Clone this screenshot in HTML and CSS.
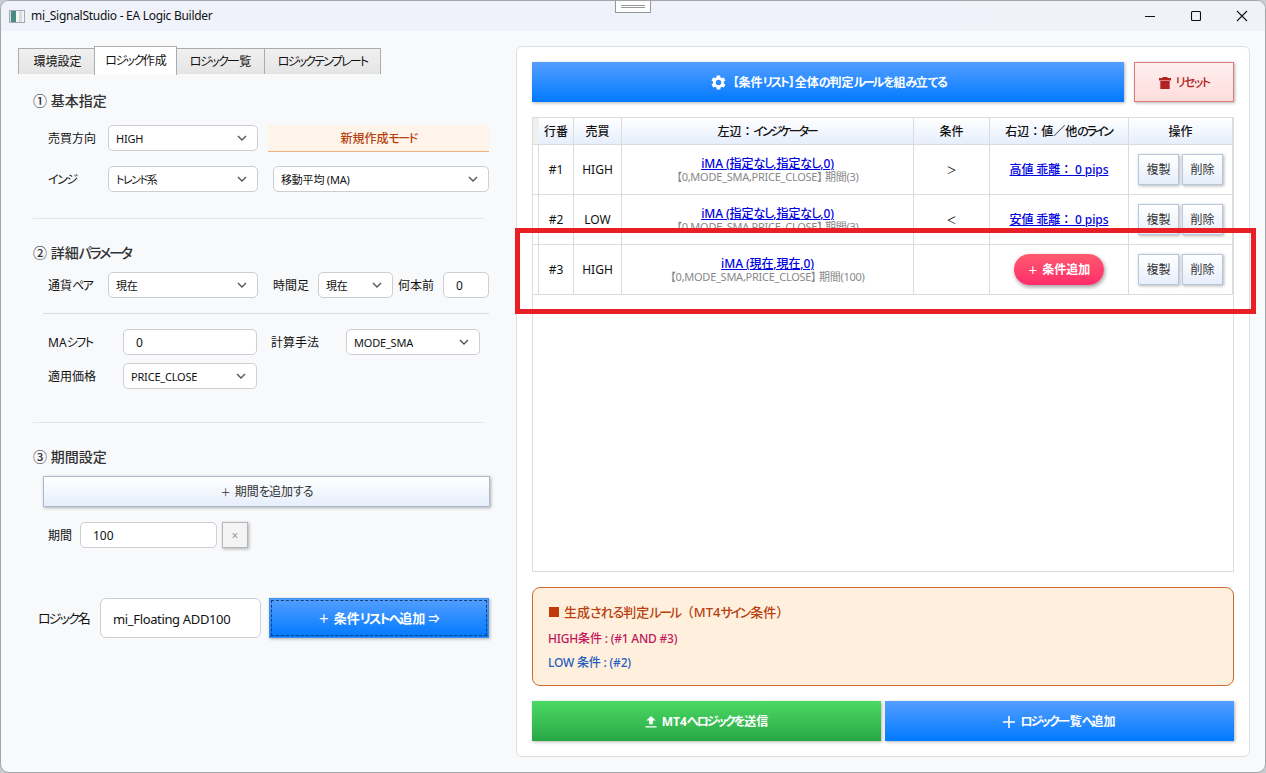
FILE: index.html
```html
<!DOCTYPE html>
<html lang="ja">
<head>
  <meta charset="UTF-8" />
  <meta name="viewport" content="width=device-width, initial-scale=1" />
  <title>mi_SignalStudio - EA Logic Builder</title>
  <link rel="stylesheet" href="styles.css">
</head>
<body>
<div class="window">
  <header class="titlebar">
    <span class="app-icon"></span>
    <span class="title">mi_SignalStudio - EA Logic Builder</span>
    <svg class="win-btn" viewBox="0 0 12 12"><path d="M1 6.5h10"/></svg>
    <svg class="win-btn" viewBox="0 0 12 12"><rect x="1.5" y="1.5" width="9" height="9" rx="1"/></svg>
    <svg class="win-btn" viewBox="0 0 12 12"><path d="M1 1l10 10M11 1L1 11"/></svg>
  </header>
  <div class="grip"></div>

  <main class="content">
    <section class="left">
      <nav class="tabs">
        <div class="tab t1">環境設定</div>
        <div class="tab t2 active"><span class="kana">ロジック</span>作成</div>
        <div class="tab t3"><span class="kana">ロジック</span>一覧</div>
        <div class="tab t4"><span class="kana">ロジックテンプレート</span></div>
      </nav>

      <h2 class="h-basic">① 基本指定</h2>
      <div class="row row-dir">
        <label class="w60">売買方向</label>
        <div class="select w150">HIGH<svg viewBox="0 0 10 6"><path d="M1 1l4 4 4-4"/></svg></div>
        <div class="mode">新規作成<span class="kana">モード</span></div>
      </div>
      <div class="row row-ind">
        <label class="w60"><span class="kana">インジ</span></label>
        <div class="select w150"><span><span class="kana">トレンド</span>系</span><svg viewBox="0 0 10 6"><path d="M1 1l4 4 4-4"/></svg></div>
        <div class="select w216">移動平均 (MA)<svg viewBox="0 0 10 6"><path d="M1 1l4 4 4-4"/></svg></div>
      </div>
      <hr class="sep sep-1">

      <h2 class="h-param">② 詳細<span class="kana tighter">パラメータ</span></h2>
      <div class="row row-pair">
        <label class="w60">通貨<span class="kana">ペア</span></label>
        <div class="select w150">現在<svg viewBox="0 0 10 6"><path d="M1 1l4 4 4-4"/></svg></div>
        <label class="l-tf">時間足</label>
        <div class="select w75">現在<svg viewBox="0 0 10 6"><path d="M1 1l4 4 4-4"/></svg></div>
        <label class="l-shift">何本前</label>
        <div class="input w46">0</div>
      </div>
      <hr class="sep sep-2">
      <div class="row row-ma">
        <label class="w75l">MA<span class="kana">シフト</span></label>
        <div class="input w134">0</div>
        <label class="l-calc">計算手法</label>
        <div class="select w134">MODE_SMA<svg viewBox="0 0 10 6"><path d="M1 1l4 4 4-4"/></svg></div>
      </div>
      <div class="row row-price">
        <label class="w75l">適用価格</label>
        <div class="select w134">PRICE_CLOSE<svg viewBox="0 0 10 6"><path d="M1 1l4 4 4-4"/></svg></div>
      </div>
      <hr class="sep sep-3">

      <h2 class="h-period">③ 期間設定</h2>
      <div class="btn btn-light add-period"><span><span class="plus">＋</span> 期間<span class="kana2">を</span>追加<span class="kana2">する</span></span></div>
      <div class="row row-period">
        <label class="w32">期間</label>
        <div class="input w137">100</div>
        <div class="btn btn-x">×</div>
      </div>

      <div class="row row-name">
        <label class="name-label"><span class="kana tight">ロジック</span>名</label>
        <div class="input name-input">mi_Floating ADD100</div>
        <div class="btn btn-blue add-list"><span><span class="plus">＋</span> 条件<span class="kana tight">リストへ</span>追加 <span class="arrow">⇒</span></span></div>
      </div>
    </section>

    <section class="panel">
      <div class="toolbar">
        <div class="btn btn-blue build">
          <svg class="icon" viewBox="0 0 24 24"><path d="M19.4 13c0-.3.1-.6.1-1s0-.7-.1-1l2.1-1.7c.2-.1.2-.4.1-.6l-2-3.500c-.1-.2-.4-.3-.6-.2l-2.500 1c-.5-.4-1.100-.7-1.700-1l-.4-2.600c0-.2-.2-.4-.5-.4h-4c-.2 0-.5.2-.5.4L9 5c-.6.300-1.200.600-1.700 1l-2.500-1c-.2-.1-.5 0-.6.2l-2 3.500c-.1.2-.1.5.1.6L4.500 11c0 .3-.1.7-.1 1s0 .7.1 1l-2.100 1.700c-.2.1-.2.4-.1.6l2 3.500c.1.2.4.3.6.2l2.500-1c.5.4 1.100.7 1.700 1l.4 2.600c0 .2.2.4.5.4h4c.2 0 .5-.2.5-.4l.4-2.600c.6-.3 1.200-.6 1.700-1l2.500 1c.2.1.5 0 .6-.2l2-3.500c.1-.2.1-.5-.1-.6L19.400 13zM12 15.800a3.800 3.800 0 1 1 0-7.600 3.800 3.800 0 0 1 0 7.600z" fill-rule="evenodd"/></svg>
          <span><span class="brackets">【条件<span class="kana tighter">リスト</span>】全</span>体<span class="kana2">の</span>判定<span class="kana tighter">ルール</span><span class="kana2">を</span>組<span class="kana">み</span>立<span class="kana">てる</span></span>
        </div>
        <div class="btn btn-reset">
          <svg class="icon" viewBox="0 0 12 12"><path d="M3.500 0h5v1H12v2.500H0V1h3.500zM1.300 4h9.400v8H1.300z"/></svg>
          <span class="kana">リセット</span>
        </div>
      </div>

      <div class="grid-box">
        <table>
          <colgroup>
            <col class="c-head"><col class="c-no"><col class="c-side"><col class="c-left"><col class="c-cond"><col class="c-right"><col class="c-op">
          </colgroup>
          <thead>
            <tr>
              <th class="corner"></th>
              <th>行番</th>
              <th>売買</th>
              <th>左辺：<span class="kana tighter">インジケーター</span></th>
              <th>条件</th>
              <th>右辺：値／他<span class="kana tighter">のライン</span></th>
              <th>操作</th>
            </tr>
          </thead>
          <tbody>
            <tr>
              <td></td>
              <td>#1</td>
              <td>HIGH</td>
              <td><a>iMA (指定<span class="kana2">なし</span>,指定<span class="kana2">なし</span>,0)</a><small>【0,MODE_SMA,PRICE_CLOSE】 期間(3)</small></td>
              <td class="cmp">＞</td>
              <td><a>高値 乖離： 0 pips</a></td>
              <td><div class="ops"><div class="btn btn-light">複製</div><div class="btn btn-light">削除</div></div></td>
            </tr>
            <tr>
              <td></td>
              <td>#2</td>
              <td>LOW</td>
              <td><a>iMA (指定<span class="kana2">なし</span>,指定<span class="kana2">なし</span>,0)</a><small>【0,MODE_SMA,PRICE_CLOSE】 期間(3)</small></td>
              <td class="cmp">＜</td>
              <td><a>安値 乖離： 0 pips</a></td>
              <td><div class="ops"><div class="btn btn-light">複製</div><div class="btn btn-light">削除</div></div></td>
            </tr>
            <tr>
              <td></td>
              <td>#3</td>
              <td>HIGH</td>
              <td><a>iMA (現在,現在,0)</a><small>【0,MODE_SMA,PRICE_CLOSE】 期間(100)</small></td>
              <td></td>
              <td><div class="pill"><span class="plus">＋</span> 条件追加</div></td>
              <td><div class="ops"><div class="btn btn-light">複製</div><div class="btn btn-light">削除</div></div></td>
            </tr>
          </tbody>
        </table>
      </div>

      <div class="rules">
        <div class="rules-title"><i class="square"></i>生成<span class="kana2">される</span>判定<span class="kana tighter">ルール</span>（MT4<span class="kana tighter">サイン</span>条件）</div>
        <div class="rule high">HIGH条件 : (#1 AND #3)</div>
        <div class="rule low">LOW 条件 : (#2)</div>
      </div>

      <div class="footer">
        <div class="btn btn-green">
          <svg class="icon" viewBox="0 0 12 13"><path d="M6 0l5 5H8v4H4V5H1zM0 11h12v1.500H0z"/></svg>
          <span>MT4<span class="kana tight">へロジック</span><span class="kana2">を</span>送信</span>
        </div>
        <div class="btn btn-blue">
          <svg class="icon" viewBox="0 0 12 12"><path d="M5.200 0h1.600v5.200H12v1.600H6.800V12H5.200V6.800H0V5.200h5.200z"/></svg>
          <span><span class="kana tight">ロジック</span>一覧<span class="kana tight">へ</span>追加</span>
        </div>
      </div>
    </section>
  </main>

  <div class="highlight"></div>
</div>
</body>
</html>
```
FILE: styles.css
```css
* {
  box-sizing: border-box;
}

body {
  margin: 0;
  background: #c9cbd0;
  font-family: "Noto Sans", "Noto Sans CJK JP", sans-serif;
  font-size: 12px;
  line-height: 16px;
  color: #111;
}

/* katakana / hiragana are set tighter than kanji */
.kana {
  font-feature-settings: "palt";
  letter-spacing: -1.5px;
}

.kana.tight {
  letter-spacing: -1.9px;
}

.kana.tighter {
  letter-spacing: -2.2px;
  margin-right: 1px;
}

.kana2 {
  font-feature-settings: "palt";
  letter-spacing: -1px;
}

.brackets {
  font-feature-settings: "palt";
}

.plus {
  margin-right: 1px;
  font-size: 0.85em;
}

.arrow {
  font-size: 0.85em;
}

.window {
  position: relative;
  width: 1266px;
  height: 773px;
  border: 1px solid #a3a5a9;
  border-radius: 9px;
  background: #f8f9fb;
  overflow: hidden;
}

.titlebar {
  height: 30px;
  padding: 0 17px 0 8px;
  display: flex;
  align-items: center;
  background: linear-gradient(90deg, #eff2fb 65%, #eff2f6);
}

.app-icon {
  width: 16px;
  height: 13px;
  margin-right: 6px;
  border: 1px solid #a4a9ae;
  background: linear-gradient(90deg, #cfe0df 0 1px, #4a8a86 1px 6px, #f4f5f5 6px 9px, #d5dde0 9px 12px, #f4f5f5 12px);
}

.title {
  flex: 1;
  font-size: 12px;
  letter-spacing: -0.28px;
}

.win-btn {
  width: 12px;
  height: 12px;
  margin-left: 34px;
  fill: none;
  stroke: #111;
  stroke-width: 1.1;
}

.grip {
  position: absolute;
  left: 614px;
  top: -1px;
  width: 36px;
  height: 13px;
  border: 1px solid #96989c;
  background: linear-gradient(#96989c, #96989c) 5px 4px / 24px 1px no-repeat,
    linear-gradient(#96989c, #96989c) 5px 6px / 24px 1px no-repeat, #fff;
}

.content {
  display: flex;
  padding: 15px 15px 15px 17px;
}

.left {
  width: 498px;
}

.tabs {
  display: flex;
  align-items: flex-end;
  height: 29px;
}

.tab {
  height: 26px;
  margin-bottom: 1px;
  border: 1px solid #acacac;
  border-bottom: none;
  background: linear-gradient(#f0f0f0, #e5e5e5);
  text-align: center;
  line-height: 26px;
}

.tab.active {
  height: 29px;
  margin-bottom: 0;
  background: #fff;
  line-height: 27px;
}

.t1 { width: 76px; border-right: none; padding-left: 2px; }
.t2 { width: 83px; padding-left: 1px; }
.t3 { width: 88px; border-left: none; }
.t4 { width: 116px; border-left: none; }

.t4 .kana {
  letter-spacing: -1.8px;
}

h2 {
  margin: 0 0 0 15px;
  font-size: 14px;
  line-height: 20px;
  font-weight: 500;
  color: #333;
}

.h-basic { margin-top: 16px; }
.h-param { margin-top: 24px; }
.h-period { margin-top: 24px; }

.row {
  display: flex;
  align-items: center;
  height: 26px;
  margin-left: 30px;
}

.row label {
  padding-top: 2px;
}

.row-dir { margin-top: 14px; }
.row-ind { margin-top: 15px; }
.row-pair { margin-top: 9px; }
.row-ma { margin-top: 15px; }
.row-price { margin-top: 8px; }
.row-period { margin-top: 15px; }

.w60 { width: 60px; }
.w75l { width: 75px; }
.w32 { width: 32px; }
.l-tf { width: 45px; margin-left: 15px; }
.l-shift { width: 45px; margin-left: 5px; }
.l-calc { width: 75px; margin-left: 14px; }

.select,
.input {
  height: 26px;
  border: 1px solid #ccced2;
  border-radius: 5px;
  background: #fff;
  display: flex;
  align-items: center;
}

.select {
  justify-content: space-between;
  padding: 1px 10px 0 7px;
  font-size: 11px;
  letter-spacing: -0.2px;
}

.select svg {
  width: 10px;
  height: 6px;
  margin-top: -2px;
  fill: none;
  stroke: #555;
  stroke-width: 1.4;
}

.input {
  padding: 1px 0 0 12px;
  font-size: 12px;
}

.w150 { width: 150px; }
.w216 { width: 216px; margin-left: 15px; }
.w75 { width: 75px; }
.w46 { width: 46px; }
.w134 { width: 134px; }
.w137 { width: 137px; }

.mode {
  width: 221px;
  height: 27px;
  margin-left: 10px;
  border-bottom: 1px solid #f0b27a;
  background: #fff4ea;
  color: #b7410e;
  font-weight: 500;
  text-align: center;
  line-height: 27px;
}

.sep {
  height: 1px;
  border: none;
  background: #e3e5e8;
}

.sep-1 { width: 451px; margin: 26px 0 0 15px; }
.sep-2 { width: 446px; margin: 15px 0 0 25px; background: #dadcdf; }
.sep-3 { width: 451px; margin: 33px 0 0 15px; }

.btn {
  display: flex;
  align-items: center;
  justify-content: center;
  padding-top: 1px;
  box-shadow: 1px 1px 3px rgba(0, 0, 0, 0.3);
}

.btn-blue {
  background: linear-gradient(#559eff, #007aff);
  color: #fff;
  font-weight: 700;
}

.btn-green {
  background: linear-gradient(#4cd964, #28a745);
  color: #fff;
  font-weight: 700;
}

.btn-light {
  border: 1px solid #b9c7dc;
  background: linear-gradient(#fff, #e6eefc);
  color: #333;
}

.add-period {
  width: 447px;
  height: 31px;
  margin: 9px 0 0 25px;
  border: 1px solid #aebacb;
}

.btn-x {
  width: 26px;
  height: 26px;
  margin-left: 5px;
  border: 1px solid #b4b6ba;
  background: #f4f4f4;
  color: #999;
}

.row-name {
  height: 40px;
  margin: 50px 0 0 20px;
}

.row .name-label {
  width: 62px;
  padding-top: 0;
  font-size: 13px;
}

.name-input {
  width: 161px;
  height: 40px;
  padding-top: 2px;
  border-radius: 6px;
  font-size: 13px;
  letter-spacing: -0.35px;
}

.add-list {
  width: 220px;
  height: 40px;
  margin-left: 8px;
  border: 1px solid #3e8de8;
  outline: 1px dashed #123f7c;
  outline-offset: -3px;
  font-size: 13px;
}

.icon {
  width: 12px;
  height: 12px;
  fill: currentColor;
}

.panel {
  width: 734px;
  height: 711px;
  padding: 15px 14px 15px 15px;
  border: 1px solid #dcdee1;
  border-radius: 6px;
  background: #fff;
}

.toolbar {
  display: flex;
  gap: 10px;
  height: 40px;
}

.build {
  width: 592px;
}

.build .icon {
  width: 17px;
  height: 17px;
  margin-right: 6px;
}

.btn-reset {
  width: 100px;
  gap: 5px;
  border: 1px solid #d97b7b;
  background: linear-gradient(#ffefef, #ffdcdc);
  color: #b22222;
  font-weight: 500;
}

.grid-box {
  width: 702px;
  height: 455px;
  margin-top: 15px;
  border: 1px solid #dcdcdc;
}

table {
  width: 700px;
  table-layout: fixed;
  border-spacing: 0;
}

.c-head { width: 6px; }
.c-no { width: 35px; }
.c-side { width: 48px; }
.c-left { width: 292px; }
.c-cond { width: 76px; }
.c-right { width: 139px; }
.c-op { width: 104px; }

th,
td {
  padding: 0;
  border-right: 1px solid #dcdcdc;
  border-bottom: 1px solid #dcdcdc;
  text-align: center;
  vertical-align: middle;
}

th {
  height: 27px;
  padding-top: 2px;
  background: linear-gradient(#fff, #e6eefc);
  font-weight: 500;
}

th.corner {
  background: #f0f0f0;
  border-right: none;
}

td {
  height: 50px;
}

td.cmp {
  font-size: 10px;
}

td a {
  color: #0000e0;
  text-decoration: underline;
  font-weight: 500;
  letter-spacing: -0.1px;
}

td small {
  display: block;
  margin-top: -1px;
  font-size: 11px;
  line-height: 12px;
  letter-spacing: -0.26px;
  font-feature-settings: "palt";
  color: #888;
}

.ops {
  display: flex;
  justify-content: center;
  gap: 3px;
}

.ops .btn {
  width: 41px;
  height: 31px;
}

.pill {
  width: 90px;
  height: 31px;
  margin: 0 auto;
  border-radius: 16px;
  background: linear-gradient(#ff5a6e, #ff2d6b);
  box-shadow: 1px 2px 4px rgba(0, 0, 0, 0.4);
  color: #fff;
  font-weight: 700;
  line-height: 32px;
}

.rules {
  width: 702px;
  height: 99px;
  margin-top: 15px;
  padding: 14px 15px;
  border: 1px solid #cd6a30;
  border-radius: 8px;
  background: #fff0de;
  font-weight: 500;
}

.rules-title {
  height: 20px;
  color: #b7410e;
  font-size: 13px;
  line-height: 20px;
}

.square {
  display: inline-block;
  width: 10px;
  height: 10px;
  margin: 0 5px 0 1px;
  background: #c03a0a;
}

.rule {
  margin-top: 8px;
  line-height: 16px;
  letter-spacing: -0.2px;
}

.rules-title + .rule {
  margin-top: 9px;
}

.high { color: #c2185b; }
.low { color: #1f5fbf; }

.footer {
  display: flex;
  gap: 4px;
  width: 702px;
  margin-top: 15px;
}

.footer .btn {
  flex: 1;
  height: 40px;
  gap: 5px;
}

/* callout frame around the newly added row */
.highlight {
  position: absolute;
  left: 514px;
  top: 227px;
  width: 741px;
  height: 86px;
  border: 5px solid #e81f25;
}
```
